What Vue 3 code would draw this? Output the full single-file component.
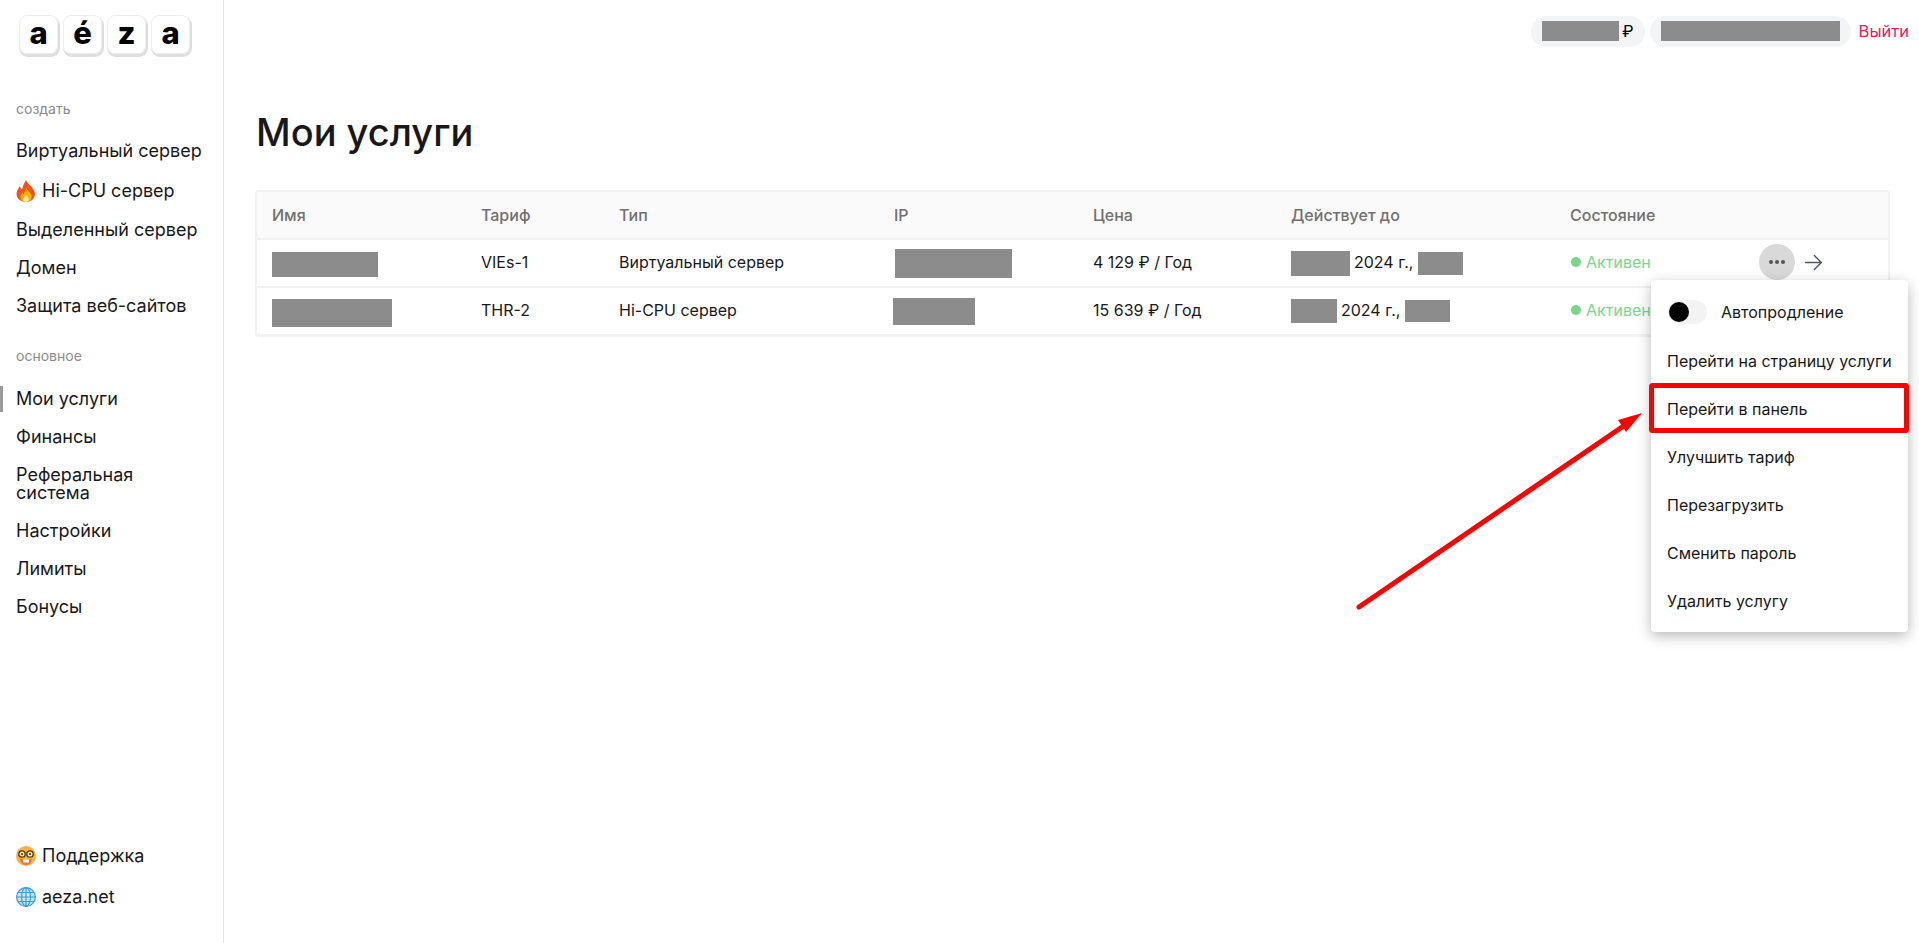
<script setup>
const createLinks = ['Виртуальный сервер', 'Hi-CPU сервер', 'Выделенный сервер', 'Домен', 'Защита веб-сайтов']
const mainLinks = ['Мои услуги', 'Финансы', 'Реферальная система', 'Настройки', 'Лимиты', 'Бонусы']
const columns = ['Имя', 'Тариф', 'Тип', 'IP', 'Цена', 'Действует до', 'Состояние', '']
const services = [
  { id: 1, plan: 'VIEs-1', type: 'Виртуальный сервер', price: '4 129 ₽ / Год', name: 'name-a', ip: 'ip-a', from: 'date-a', time: 'time-a' },
  { id: 2, plan: 'THR-2', type: 'Hi-CPU сервер', price: '15 639 ₽ / Год', name: 'name-b', ip: 'ip-b', from: 'date-b', time: 'time-b' }
]
const menuItems = ['Перейти на страницу услуги', 'Перейти в панель', 'Улучшить тариф', 'Перезагрузить', 'Сменить пароль', 'Удалить услугу']
</script>

<template>
  <div class="page">
    <aside class="sidebar">
      <div class="logo">
        <span v-for="(l, i) in ['a', 'é', 'z', 'a']" :key="i" class="key">{{ l }}</span>
      </div>

      <div class="group-title first">создать</div>
      <a v-for="link in createLinks" :key="link" class="nav-link" :class="{ 'with-emoji': link.startsWith('Hi') }">
        <svg v-if="link.startsWith('Hi')" class="emoji fire" viewBox="1 0 18 22" preserveAspectRatio="none">
          <path d="M10 0c1 4 7 7 8 13 .6 5-3.4 9-8 9s-9-3.500-8.500-9C1.800 10 3.500 8 4.500 6c.3 2 1 3 2 3.500C7 6 8.500 3 10 0z" fill="#f4511e" />
          <path d="M10.500 8c.6 3 4.500 5 4.500 9 0 3-2.400 5-5 5s-5-2-5-5c0-2 1-3.500 2-4.500.2 1 .7 1.600 1.300 2C8.500 12 9.500 10 10.500 8z" fill="#ffb300" />
          <path d="M10.300 15c.3 1.500 2.200 2.500 2.200 4.300 0 1.600-1.200 2.700-2.500 2.700s-2.500-1.100-2.500-2.700c0-1.800 2-2.800 2.800-4.300z" fill="#ffe9a8" />
        </svg>
        {{ link }}
      </a>

      <div class="group-title second">основное</div>
      <a v-for="link in mainLinks" :key="link" class="nav-link" :class="{ active: link === 'Мои услуги' }">{{ link }}</a>

      <div class="sidebar-bottom">
        <a class="nav-link">
          <svg class="emoji" viewBox="0 0 20 20">
            <circle cx="10" cy="10" r="10" fill="#fbb03b" />
            <path d="M4 12.500c2 1.500 10 1.500 12 0-.5 4-3 6.500-6 6.500s-5.500-2.500-6-6.500z" fill="#e8743b" />
            <path d="M7 13.500h6v3H7z" fill="#fff" />
            <circle cx="6" cy="8" r="3.200" fill="#ffe6a6" stroke="#4a3520" stroke-width="1.300" />
            <circle cx="14" cy="8" r="3.200" fill="#ffe6a6" stroke="#4a3520" stroke-width="1.300" />
            <circle cx="6" cy="8" r="1.100" fill="#4a3520" />
            <circle cx="14" cy="8" r="1.100" fill="#4a3520" />
          </svg>
          Поддержка
        </a>
        <a class="nav-link">
          <svg class="emoji" viewBox="0 0 20 20">
            <circle cx="10" cy="10" r="10" fill="#bfe6f7" />
            <g fill="none" stroke="#3d9fce" stroke-width="1.200">
              <circle cx="10" cy="10" r="9.300" />
              <ellipse cx="10" cy="10" rx="4.500" ry="9.300" />
              <path d="M10 .7v18.600M.7 10h18.600M2.200 5.500h15.600M2.200 14.500h15.600" />
            </g>
          </svg>
          aeza.net
        </a>
      </div>
    </aside>

    <main class="content">
      <header class="topbar">
        <div class="pill balance"><span class="hidden-block balance-value"></span><span>₽</span></div>
        <div class="pill account"><span class="hidden-block account-value"></span></div>
        <a class="logout">Выйти</a>
      </header>

      <h1 class="title">Мои услуги</h1>

      <div class="services">
        <div class="row head">
          <div v-for="col in columns" :key="col" class="cell">{{ col }}</div>
        </div>
        <div v-for="s in services" :key="s.id" class="row body">
          <div class="cell"><span class="hidden-block" :class="s.name"></span></div>
          <div class="cell">{{ s.plan }}</div>
          <div class="cell">{{ s.type }}</div>
          <div class="cell"><span class="hidden-block" :class="s.ip"></span></div>
          <div class="cell">{{ s.price }}</div>
          <div class="cell date">
            <span class="hidden-block" :class="s.from"></span>
            <span>2024 г.,</span>
            <span class="hidden-block" :class="s.time"></span>
          </div>
          <div class="cell status"><i class="dot"></i>Активен</div>
          <div class="cell actions">
            <template v-if="s.id === 1">
              <button class="more"><i></i><i></i><i></i></button>
              <svg class="arrow" viewBox="0 0 24 24" fill="none" stroke="#4b5563" stroke-width="1.600" stroke-linecap="round" stroke-linejoin="round">
                <path d="M3 12h18M13 4l8 8-8 8" />
              </svg>
            </template>
          </div>
        </div>
      </div>
    </main>

    <!-- dropdown opened from the first row -->
    <div class="menu">
      <div class="menu-switch">
        <span class="toggle"><span class="knob"></span></span>
        <span>Автопродление</span>
      </div>
      <a v-for="item in menuItems" :key="item" class="menu-item">{{ item }}</a>
    </div>

    <!-- red annotation drawn over the screenshot -->
    <svg class="annotation" viewBox="0 0 1919 943">
      <rect x="1651.500" y="385.500" width="255" height="45" rx="1" fill="none" stroke="#ff0000" stroke-width="5" />
      <path d="M1359 607L1625 425" stroke="#ff0000" stroke-width="5" stroke-linecap="round" fill="none" />
      <path d="M1642 413L1618 420L1626 432Z" fill="#ff0000" />
    </svg>
  </div>
</template>

<style>
html,
body {
  margin: 0;
  background: #fff;
}
</style>

<style scoped>
.page {
  position: relative;
  display: flex;
  height: 943px;
  overflow: hidden;
  font-family: Inter, "Liberation Sans", sans-serif;
  color: #18181b;
}

.sidebar {
  display: flex;
  flex-direction: column;
  flex: none;
  box-sizing: border-box;
  width: 224px;
  height: 100%;
  padding-top: 15px;
  border-right: 1px solid #e2e2e2;
}

.logo {
  display: flex;
  gap: 5px;
  margin-left: 19px;
}

.key {
  display: flex;
  align-items: center;
  justify-content: center;
  box-sizing: border-box;
  width: 39px;
  height: 39px;
  border: 1px solid #ececec;
  border-radius: 8px;
  box-shadow: 1px 2px 0 1px #dedede;
  font-size: 31px;
  font-weight: 800;
  color: #000;
  padding-bottom: 5px;
}

.group-title {
  padding-left: 16px;
  font-size: 14px;
  line-height: 16px;
  color: #8a8a8a;
}

.group-title.first {
  margin-top: 47px;
  margin-bottom: 15px;
}

.group-title.second {
  margin-top: 23.200px;
  margin-bottom: 15.500px;
}

.nav-link {
  position: relative;
  display: block;
  box-sizing: border-box;
  padding: 10px 16px;
  font-size: 18px;
  line-height: 18px;
  color: #18181b;
}

.nav-link.with-emoji {
  display: flex;
  align-items: center;
  gap: 6px;
  height: 41.300px;
}

.nav-link.active::before {
  content: '';
  position: absolute;
  left: 0;
  top: 6px;
  width: 3px;
  height: 26px;
  background: #9a9a9a;
}

.emoji {
  width: 20px;
  height: 20px;
  flex: none;
  vertical-align: -4px;
}

.emoji.fire {
  height: 22px;
}

.sidebar-bottom {
  margin-top: auto;
  padding-bottom: 26px;
}

.sidebar-bottom .nav-link {
  display: flex;
  align-items: center;
  gap: 6px;
  height: 41px;
}

.content {
  flex: 1;
  min-width: 0;
}

.topbar {
  display: flex;
  align-items: center;
  justify-content: flex-end;
  gap: 5px;
  height: 62px;
  padding-right: 10px;
  font-size: 16.500px;
}

.pill {
  display: flex;
  align-items: center;
  box-sizing: border-box;
  height: 31px;
  padding: 0 11px;
  border-radius: 16px;
  background: #f3f4f6;
  gap: 3px;
  color: #000;
}

.balance-value {
  width: 77px;
  height: 20px;
}

.account-value {
  width: 179px;
  height: 20px;
}

.logout {
  margin-left: 3px;
  color: #e8185c;
}

.title {
  margin: 48px 0 36px 32px;
  font-size: 38px;
  font-weight: 500;
  line-height: 44px;
}

.services {
  box-sizing: border-box;
  margin: 0 29px 0 31px;
  border: 2px solid #f2f2f2;
  border-bottom-width: 3px;
  border-radius: 4px;
  font-size: 16px;
}

.row {
  display: grid;
  grid-template-columns: 209px 138px 275px 199px 198px 279px 189px 1fr;
  align-items: center;
  height: 46px;
  padding-left: 15px;
  border-bottom: 2px solid #f1f1f1;
}

.row.body {
  height: 44px;
  padding-bottom: 2px;
}

.row:last-child {
  border-bottom: 0;
}

.row.head {
  background: #fafafa;
  font-weight: 500;
  color: #71706e;
}

.cell {
  display: flex;
  align-items: center;
  white-space: nowrap;
}

.hidden-block {
  display: inline-block;
  background: #8c8c8c;
}

.row.body .hidden-block {
  position: relative;
  top: 1px;
}

.name-a {
  width: 106px;
  height: 25px;
  margin-top: 3px;
}

.name-b {
  width: 120px;
  height: 28px;
  margin-top: 3px;
}

.ip-a {
  width: 117px;
  height: 29px;
  margin-left: 1px;
}

.ip-b {
  width: 82px;
  height: 27px;
  margin-left: -1px;
}

.date {
  gap: 4px;
}

.date-a {
  width: 59px;
  height: 25px;
}

.time-a {
  width: 45px;
  height: 23px;
  margin-left: 1px;
}

.date-b {
  width: 46px;
  height: 24px;
}

.time-b {
  width: 45px;
  height: 22px;
  margin-left: 1px;
}

.status {
  color: #74d88b;
}

.dot {
  width: 10px;
  height: 10px;
  margin: 0 5px 0 1px;
  border-radius: 50%;
  background: #74d88b;
}

.actions {
  gap: 8px;
}

.more {
  display: flex;
  align-items: center;
  justify-content: center;
  gap: 2px;
  width: 36px;
  height: 36px;
  padding: 0;
  border: 0;
  border-radius: 50%;
  background: #d9d9d9;
}

.more i {
  width: 4px;
  height: 4px;
  border-radius: 50%;
  background: #555;
}

.arrow {
  width: 21px;
  height: 21px;
}

.menu {
  position: absolute;
  left: 1651px;
  top: 280px;
  box-sizing: border-box;
  width: 257px;
  height: 352px;
  padding-top: 8px;
  border-radius: 4px;
  background: #fff;
  box-shadow: 0 4px 14px rgba(0, 0, 0, 0.28);
  font-size: 16px;
}

.menu-switch {
  display: flex;
  align-items: center;
  gap: 14px;
  height: 48px;
  margin-bottom: 1px;
  padding-left: 17px;
}

.toggle {
  display: block;
  width: 39px;
  height: 24px;
  border-radius: 12px;
  background: #f3f3f3;
}

.knob {
  display: block;
  width: 20px;
  height: 20px;
  margin: 2px 0 0 1px;
  border-radius: 50%;
  background: #000;
}

.menu-item {
  display: block;
  padding-left: 16px;
  line-height: 48px;
  white-space: nowrap;
}

.annotation {
  position: absolute;
  left: 0;
  top: 0;
  width: 1919px;
  height: 943px;
  pointer-events: none;
}
</style>
